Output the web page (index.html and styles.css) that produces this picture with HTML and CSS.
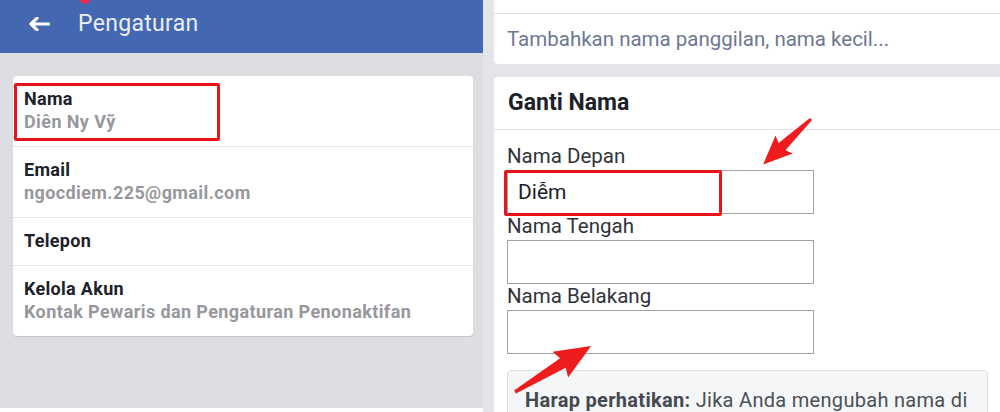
FILE: index.html
```html
<!DOCTYPE html>
<html lang="id">
<head>
    <meta charset="UTF-8">
    <meta name="viewport" content="width=device-width, initial-scale=1.0">
    <title>Pengaturan</title>
    <link rel="stylesheet" href="styles.css">
</head>
<body>

<div class="screen">
    <!-- Left: settings list -->
    <div class="settings">
        <div class="topbar">
            <span class="notif-dot"></span>
            <svg class="back" width="22" height="14" viewBox="0 0 22 14">
                <path d="M21 7H3 M9 1.2L3 7L9 12.8" fill="none" stroke="#fff" stroke-width="3.2" stroke-linecap="round" stroke-linejoin="round"/>
            </svg>
            <span class="topbar-title">Pengaturan</span>
        </div>

        <div class="menu">
            <div class="menu-row">
                <div class="menu-label">Nama</div>
                <div class="menu-value">Diên Ny Vỹ</div>
                <div class="mark mark-name"></div>
            </div>
            <div class="menu-row">
                <div class="menu-label">Email</div>
                <div class="menu-value">ngocdiem.225@gmail.com</div>
            </div>
            <div class="menu-row">
                <div class="menu-label">Telepon</div>
            </div>
            <div class="menu-row">
                <div class="menu-label">Kelola Akun</div>
                <div class="menu-value">Kontak Pewaris dan Pengaturan Penonaktifan</div>
            </div>
        </div>
    </div>

    <!-- Right: change name form -->
    <div class="editor">
        <div class="card nickname">
            <div class="nickname-top"></div>
            <div class="nickname-text">Tambahkan nama panggilan, nama kecil...</div>
        </div>

        <div class="card change-name">
            <div class="card-title">Ganti Nama</div>
            <div class="form">
                <label class="field-label">Nama Depan</label>
                <div class="field">
                    <input class="field-input" type="text" value="Diễm">
                    <div class="mark mark-first"></div>
                </div>
                <label class="field-label">Nama Tengah</label>
                <div class="field">
                    <input class="field-input" type="text">
                </div>
                <label class="field-label">Nama Belakang</label>
                <div class="field">
                    <input class="field-input" type="text">
                </div>

                <div class="notice">
                    <b>Harap perhatikan:</b> Jika Anda mengubah nama di
                </div>
            </div>
        </div>
    </div>

    <!-- red annotation arrows -->
    <svg class="arrows" width="1000" height="412" viewBox="0 0 1000 412">
        <g transform="translate(811 119) rotate(136.5)">
            <polygon points="0,-1.5 40,-5 37,-12.5 66,0 37,12.5 40,5 0,1.5" fill="#ee1c1c"/>
        </g>
        <g transform="translate(515 392) rotate(-31.2)">
            <polygon points="0,-1.8 56,-5.5 53,-15 89,0 53,15 56,5.5 0,1.8" fill="#ee1c1c"/>
        </g>
    </svg>
</div>

</body>
</html>
```

FILE: styles.css
```css
/* Reset */
* {
    margin: 0;
    padding: 0;
    box-sizing: border-box;
}

body {
    font-family: 'Roboto', 'Liberation Sans', sans-serif;
    background: #fff;
    color: #1d2129;
    width: 1000px;
    height: 412px;
    overflow: hidden;
}

.screen {
    position: relative;
    display: flex;
    height: 412px;
}

/* Left column */
.settings {
    width: 483px;
    height: 408px;
    background-color: #dcdee2;
    flex-shrink: 0;
}

.topbar {
    position: relative;
    height: 53px;
    background-color: #4467b1;
    display: flex;
    align-items: center;
    padding-left: 28px;
    overflow: hidden;
}

.notif-dot {
    position: absolute;
    left: 80px;
    top: -6px;
    width: 10px;
    height: 10px;
    border-radius: 50%;
    background-color: #f02849;
}

.back {
    display: block;
    margin-top: -6px;
}

.topbar-title {
    margin-left: 28px;
    margin-top: -7px;
    font-size: 23px;
    color: #e8edf6;
    letter-spacing: 0.3px;
}

.menu {
    margin: 23px 10px 0 13px;
    background-color: #fff;
    border-radius: 4px;
    box-shadow: 0 1px 1px rgba(0, 0, 0, 0.12);
}

.menu-row {
    position: relative;
    padding: 11px 11px 13px;
    border-bottom: 1px solid #e5e6e9;
    line-height: 23px;
}

.menu-row:last-child {
    border-bottom: none;
}

.menu-label {
    font-size: 18px;
    font-weight: 700;
    color: #1d2129;
    letter-spacing: 0.3px;
}

.menu-value {
    font-size: 18px;
    font-weight: 700;
    color: #96989d;
    letter-spacing: 0.4px;
}

/* Red highlight boxes */
.mark {
    position: absolute;
    border: 3px solid #e8131b;
    border-radius: 2px;
}

.mark-name {
    left: 1px;
    top: 7px;
    width: 206px;
    height: 58px;
}

.mark-first {
    left: -3px;
    top: 0;
    width: 218px;
    height: 46px;
}

/* Right column */
.editor {
    flex: 1;
    background-color: #e3e5e8;
    padding-left: 11px;
    overflow: hidden;
}

.card {
    background-color: #fff;
    border-radius: 4px 0 0 4px;
    margin-right: -10px;
}

.nickname {
    height: 64px;
    border-radius: 0 0 0 4px;
}

.nickname-top {
    height: 14px;
    border-bottom: 1px solid #dddfe2;
}

.nickname-text {
    padding: 13px 13px 0;
    font-size: 20.5px;
    line-height: 24px;
    color: #6b7794;
}

.change-name {
    margin-top: 13px;
    height: 400px;
}

.card-title {
    height: 53px;
    padding: 13px 14px 0;
    font-size: 23px;
    font-weight: 700;
    line-height: 26px;
    border-bottom: 1px solid #e1e2e5;
}

.form {
    padding: 14px 0 0 13px;
}

.field-label {
    display: block;
    font-size: 20.5px;
    line-height: 25px;
    color: #30333a;
}

.field {
    position: relative;
    width: 307px;
    margin-top: 1px;
}

.field-input {
    display: block;
    width: 307px;
    height: 44px;
    border: 1.5px solid #a0a2a5;
    border-radius: 0;
    padding: 0 10px;
    font-family: inherit;
    font-size: 21px;
    color: #1d2129;
    outline: none;
}

.notice {
    margin-top: 16px;
    width: 481px;
    height: 60px;
    background-color: #f5f6f7;
    border: 1px solid #dadde1;
    border-radius: 4px;
    padding: 17px 17px 0;
    font-size: 20px;
    line-height: 24px;
    color: #4b4f56;
    letter-spacing: 0.3px;
}

.notice b {
    color: #444950;
}

.arrows {
    position: absolute;
    left: 0;
    top: 0;
    pointer-events: none;
}
```
